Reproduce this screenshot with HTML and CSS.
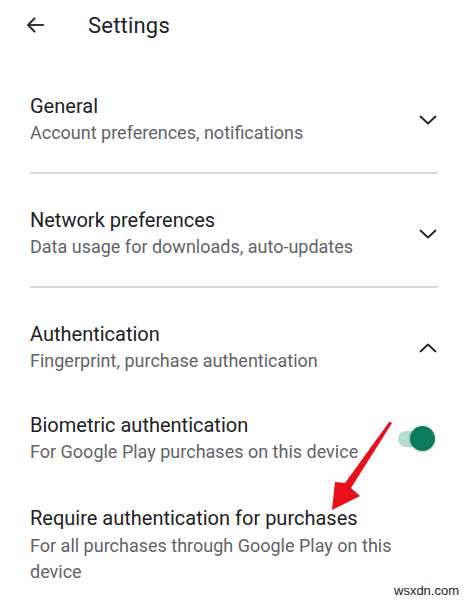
FILE: index.html
```html
<!DOCTYPE html>
<html>
<head>
<meta charset="utf-8">
<link rel="stylesheet" href="styles.css">
</head>
<body>
<div class="page">
  <header class="topbar">
    <svg class="back" width="24" height="24" viewBox="0 0 24 24"><path d="M20 12H5M11.5 5.5L5 12l6.5 6.5" fill="none" stroke="#333" stroke-width="2.2" stroke-linecap="round" stroke-linejoin="round"/></svg>
    <h1 class="title">Settings</h1>
  </header>

  <section class="group">
    <div class="row">
      <div class="text">
        <div class="label">General</div>
        <div class="sub">Account preferences, notifications</div>
      </div>
      <svg class="chev" width="18" height="10" viewBox="0 0 18 10"><path d="M1.5 1.5L9 8.5l7.5-7" fill="none" stroke="#222" stroke-width="1.8" stroke-linecap="round" stroke-linejoin="round"/></svg>
    </div>
  </section>
  <hr class="divider">
  <section class="group">
    <div class="row">
      <div class="text">
        <div class="label">Network preferences</div>
        <div class="sub">Data usage for downloads, auto-updates</div>
      </div>
      <svg class="chev" width="18" height="10" viewBox="0 0 18 10"><path d="M1.5 1.5L9 8.5l7.5-7" fill="none" stroke="#222" stroke-width="1.8" stroke-linecap="round" stroke-linejoin="round"/></svg>
    </div>
  </section>
  <hr class="divider">
  <section class="group">
    <div class="row">
      <div class="text">
        <div class="label">Authentication</div>
        <div class="sub">Fingerprint, purchase authentication</div>
      </div>
      <svg class="chev" width="18" height="10" viewBox="0 0 18 10"><path d="M1.5 8.5L9 1.5l7.5 7" fill="none" stroke="#222" stroke-width="1.8" stroke-linecap="round" stroke-linejoin="round"/></svg>
    </div>
    <div class="row item">
      <div class="text">
        <div class="label">Biometric authentication</div>
        <div class="sub">For Google Play purchases on this device</div>
      </div>
      <div class="toggle"><span class="track"></span><span class="thumb"></span></div>
    </div>
    <div class="row item item-last">
      <div class="text narrow">
        <div class="label">Require authentication for purchases</div>
        <div class="sub sub-wrap">For all purchases through Google Play on this device</div>
      </div>
    </div>
  </section>

  <svg class="pointer" width="468" height="600" viewBox="0 0 468 600">
    <path d="M392 423 L389.5 421.5 L345 483 L335 482 L332 510 L360 496 L351 488 Z" fill="#e8101a"/>
  </svg>
  <div class="mark">wsxdn.com</div>
</div>
</body>
</html>
```
FILE: styles.css
```css
* { box-sizing: border-box; }
html, body { margin: 0; padding: 0; background: #fff; }
body { font-family: Roboto, "Noto Sans", sans-serif; color: #202124; }
.page { position: relative; width: 468px; height: 600px; overflow: hidden; }

.topbar { height: 50px; display: flex; align-items: center; padding-left: 23px; margin-bottom: 10px; }
.back { display: block; }
.title { margin: 0 0 0 41px; font-size: 22px; font-weight: 400; color: #202124; letter-spacing: 0.2px; }

.group { padding: 33px 30px 27px 30px; }
.row { display: flex; align-items: center; justify-content: space-between; }
.text { display: flex; flex-direction: column; }
.label { font-size: 20px; line-height: 26px; color: #202124; }
.sub { font-size: 18px; line-height: 25px; color: #5f6368; margin-top: 1px; }
.sub-wrap { line-height: 26px; margin-top: 1.5px; }
.chev { margin-right: 1px; margin-top: 2px; }

.divider { margin: 0 30px; border: 0; height: 2px; background: #dadada; }

.item { margin-top: 39px; }
.item-last { margin-top: 41px; }
.narrow { width: 372px; }

.toggle { position: relative; width: 44px; height: 26px; margin-right: -2px; }
.track { position: absolute; left: 2px; top: 6px; width: 34px; height: 16px; border-radius: 8px; background: #b5ddd0; }
.thumb { position: absolute; left: 14px; top: 1px; width: 25px; height: 25px; border-radius: 50%; background: #0b7d5c; box-shadow: 0 1px 3px rgba(0,0,0,0.25); }

.pointer { position: absolute; left: 0; top: 0; pointer-events: none; }
.mark { position: absolute; left: 394px; top: 583px; font-size: 13px; color: #222; font-family: "Liberation Sans", Arial, sans-serif; }
```
